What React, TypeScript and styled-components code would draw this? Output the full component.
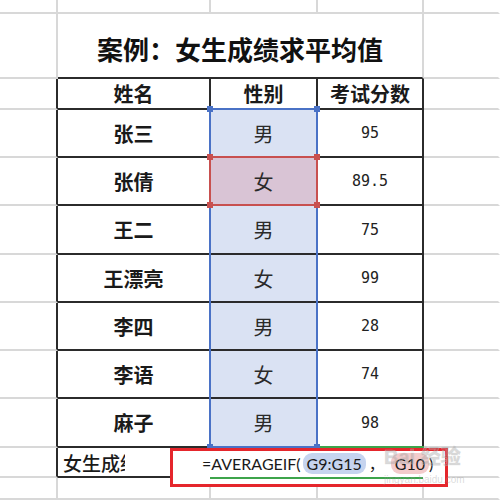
import React from 'react';
import styled, { createGlobalStyle } from 'styled-components';

const GlobalStyle = createGlobalStyle`
  html, body { margin: 0; padding: 0; background: #fff; }
  body { font-family: "Noto Sans CJK SC", "Noto Sans", sans-serif; }
`;

const GRID = '#d8d8d8';
const DARK = '#2b2b2b';
const BLUE = '#4a72c6';
const RED = '#c8504f';
const GREEN = '#3da44b';

type Line = 'grid' | 'dark' | 'none';
const lineColor = (l?: Line) => (l === 'dark' ? DARK : l === 'none' ? 'transparent' : GRID);

const Sheet = styled.div`
  position: relative;
  width: 500px;
  height: 500px;
  overflow: hidden;
  display: grid;
  grid-template-columns: 58px 153px 107px 106px 1fr;
  grid-template-rows: 14px 65px 31px 48px 48px 49px 48px 48px 48px 49px 30px 1fr;
`;

const Overlay = styled.div`
  position: absolute;
  inset: 0;
  pointer-events: none;
  display: grid;
  grid-template-columns: 58px 153px 107px 106px 1fr;
  grid-template-rows: 14px 65px 31px 48px 48px 49px 48px 48px 48px 49px 30px 1fr;
`;

const Cell = styled.div<{ $right?: Line; $bottom?: Line; $fill?: string; $span?: number; $left?: boolean }>`
  box-sizing: border-box;
  min-width: 0;
  overflow: hidden;
  grid-column: span ${p => p.$span ?? 1};
  border-right: 2px solid ${p => lineColor(p.$right)};
  border-bottom: 2px solid ${p => lineColor(p.$bottom)};
  background: ${p => p.$fill ?? '#fff'};
  display: flex;
  align-items: center;
  justify-content: ${p => (p.$left ? 'flex-start' : 'center')};
  padding-left: ${p => (p.$left ? '5px' : '0')};
  color: #1a1a1a;
`;

const Title = styled.span`
  font-size: 26px;
  font-weight: 700;
  padding-top: 5px;
  color: #111;
  white-space: nowrap;
`;

const HeadText = styled.span`
  font-size: 20px;
  font-weight: 700;
`;

const NameText = styled.span`
  font-size: 20px;
  font-weight: 700;
`;

const GenderText = styled.span`
  font-size: 20px;
  font-weight: 400;
  color: #2a2a2a;
`;

const ScoreText = styled.span`
  font-family: "DejaVu Sans Mono", "Liberation Mono", monospace;
  font-size: 15px;
  color: #222;
`;

const Label = styled.span`
  font-size: 19px;
  font-weight: 500;
  max-width: 62px;
  overflow: hidden;
  white-space: nowrap;
`;

const Selection = styled.div<{ $row: string; $color: string }>`
  position: relative;
  grid-row: ${p => p.$row};
  grid-column: 3;
  margin: -2px 0 0 -2px;
  border: 2px solid ${p => p.$color};
`;

const ActiveCell = styled.div`
  grid-row: 11;
  grid-column: 3 / 5;
  margin: -2px 0 0 -2px;
  border-top: 2px solid ${GREEN};
`;

const Handle = styled.span<{ $x: 'l' | 'r'; $y: 't' | 'b'; $color: string }>`
  position: absolute;
  width: 6px;
  height: 6px;
  background: ${p => p.$color};
  ${p => (p.$x === 'l' ? 'left: -4px;' : 'right: -4px;')}
  ${p => (p.$y === 't' ? 'top: -4px;' : 'bottom: -4px;')}
`;

const Annotation = styled.div`
  position: absolute;
  left: 170px;
  top: 448px;
  width: 278px;
  height: 39px;
  box-sizing: border-box;
  border: 3px solid #e5262c;
  background: #fff;
`;

const FormulaLine = styled.div`
  height: 24px;
  display: flex;
  align-items: center;
  padding-left: 29px;
  font-family: Lato, "Liberation Sans", sans-serif;
  font-size: 16px;
  color: #1a1a1a;
  white-space: nowrap;
`;

const Pill = styled.span<{ $bg: string }>`
  display: inline-flex;
  align-items: center;
  height: 21px;
  padding: 0 4px;
  margin-left: 2px;
  border-radius: 9px;
  background: ${p => p.$bg};
`;

const Comma = styled.span`
  font-family: "Noto Sans CJK SC", sans-serif;
  width: 20px;
  padding-left: 3px;
`;

const GreenRule = styled.span`
  position: absolute;
  left: 37px;
  top: 26px;
  width: 213px;
  height: 2px;
  background: ${GREEN};
`;

const Watermark = styled.div`
  position: absolute;
  left: 384px;
  top: 447px;
  display: flex;
  flex-direction: column;
  align-items: flex-start;
  color: rgba(150, 150, 150, 0.35);
  font-family: "Liberation Sans", "Noto Sans CJK SC", sans-serif;
  line-height: 1;
  pointer-events: none;
`;

const WatermarkBig = styled.span`
  font-size: 20px;
  font-weight: 700;
  -webkit-text-stroke: 0.6px rgba(200, 200, 200, 0.5);
`;

const WatermarkSmall = styled.span`
  font-size: 10px;
  margin-top: 8px;
`;

const names = ['张三', '张倩', '王二', '王漂亮', '李四', '李语', '麻子'];
const genders = ['男', '女', '男', '女', '男', '女', '男'];
const scores = ['95', '89.5', '75', '99', '28', '74', '98'];

const BLUE_FILL = '#dae2f3';
const PINK_FILL = '#d9c4d5';

export default function App() {
  return (
    <>
      <GlobalStyle />
      <Sheet>
        {/* top row */}
        <Cell />
        <Cell />
        <Cell />
        <Cell />
        <Cell $right="none" />

        {/* title row */}
        <Cell />
        <Cell $span={3} $bottom="dark">
          <Title>案例：女生成绩求平均值</Title>
        </Cell>
        <Cell $right="none" />

        {/* header row */}
        <Cell $right="dark" />
        <Cell $right="dark" $bottom="dark"><HeadText>姓名</HeadText></Cell>
        <Cell $right="dark" $bottom="dark"><HeadText>性别</HeadText></Cell>
        <Cell $right="dark" $bottom="dark"><HeadText>考试分数</HeadText></Cell>
        <Cell $right="none" />

        {names.map((n, i) => (
          <React.Fragment key={n}>
            <Cell $right="dark" />
            <Cell $right="dark" $bottom="dark"><NameText>{n}</NameText></Cell>
            <Cell $right="dark" $bottom="dark" $fill={i === 1 ? PINK_FILL : BLUE_FILL}>
              <GenderText>{genders[i]}</GenderText>
            </Cell>
            <Cell $right="dark" $bottom="dark"><ScoreText>{scores[i]}</ScoreText></Cell>
            <Cell $right="none" />
          </React.Fragment>
        ))}

        {/* formula row */}
        <Cell $right="dark" />
        <Cell $right="dark" $bottom="dark" $left><Label>女生成绩平均分</Label></Cell>
        <Cell $span={2} $right="dark" $bottom="dark" />
        <Cell $right="none" />

        {/* bottom row */}
        <Cell />
        <Cell />
        <Cell />
        <Cell />
        <Cell $right="none" />

        <Overlay>
          <ActiveCell />
          <Selection $row="4 / 11" $color={BLUE}>
            <Handle $x="l" $y="t" $color={BLUE} />
            <Handle $x="r" $y="t" $color={BLUE} />
            <Handle $x="l" $y="b" $color={BLUE} />
            <Handle $x="r" $y="b" $color={BLUE} />
          </Selection>
          <Selection $row="5" $color={RED}>
            <Handle $x="l" $y="t" $color={RED} />
            <Handle $x="r" $y="t" $color={RED} />
            <Handle $x="l" $y="b" $color={RED} />
            <Handle $x="r" $y="b" $color={RED} />
          </Selection>
        </Overlay>

        <Annotation>
          <FormulaLine>
            =AVERAGEIF(
            <Pill $bg="#c6d4ef">G9:G15</Pill>
            <Comma>，</Comma>
            <Pill $bg="#f3cbcb">G10</Pill>)
          </FormulaLine>
          <GreenRule />
        </Annotation>

        <Watermark>
          <WatermarkBig>Bai 经验</WatermarkBig>
          <WatermarkSmall>jingyan.baidu.com</WatermarkSmall>
        </Watermark>
      </Sheet>
    </>
  );
}
